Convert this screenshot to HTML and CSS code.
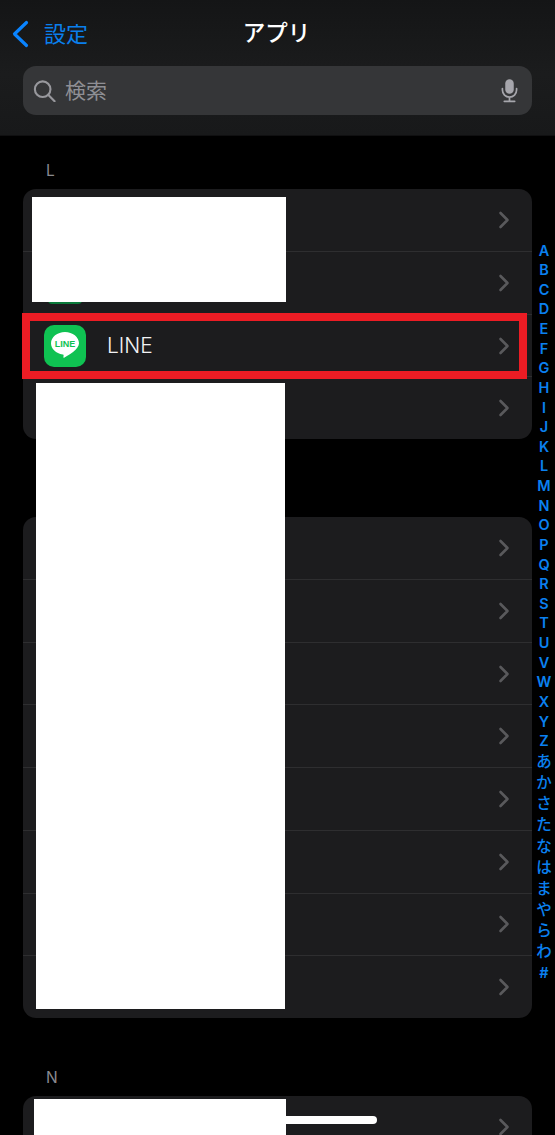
FILE: index.html
```html
<!DOCTYPE html>
<html lang="ja">
<head>
<meta charset="utf-8">
<title>アプリ</title>
<link rel="stylesheet" href="styles.css">
</head>
<body>
<div class="screen">
  <header class="header">
    <div class="nav">
      <div class="back">
        <svg class="back-icon" viewBox="0 0 18 28"><path d="M15.500 2.500 3.500 14l12 11.500"/></svg>
        <span class="back-text">設定</span>
      </div>
      <div class="title">アプリ</div>
    </div>
    <div class="search">
      <svg class="search-icon" viewBox="0 0 24 24"><circle cx="10" cy="10" r="8.500"/><path d="m16 16 7 7.200"/></svg>
      <span class="search-text">検索</span>
      <svg class="mic" viewBox="0 0 18 25"><rect x="4.500" y="0.500" width="9" height="15.500" rx="4.500"/><path class="mic-line" d="M1.500 10.500v1.500a7.500 7.500 0 0 0 15 0v-1.500M9 19.500v4M3.500 24h11"/></svg>
    </div>
  </header>

  <main class="list">
    <div class="section-label">L</div>
    <section class="group">
      <div class="row"><svg class="chev" viewBox="0 0 12 20"><path d="m2.500 3 7 7-7 7"/></svg></div>
      <div class="row"><svg class="chev" viewBox="0 0 12 20"><path d="m2.500 3 7 7-7 7"/></svg></div>
      <div class="row">
        <div class="app-icon">
          <svg viewBox="0 0 42 42">
            <path class="bubble" d="M21 7C13.300 7 7 12 7 18.300c0 5.600 5 10.300 11.700 11.200.5.100 1 .4.900 1l-.2 1.400c-.1.800.4 1.100 1.100.7 3.500-2 14.500-8.200 14.500-14.300C35 12 28.700 7 21 7z"/>
            <text class="logo-text" x="21" y="22.400" text-anchor="middle">LINE</text>
          </svg>
        </div>
        <span class="row-label">LINE</span>
        <svg class="chev" viewBox="0 0 12 20"><path d="m2.500 3 7 7-7 7"/></svg>
      </div>
      <div class="row"><svg class="chev" viewBox="0 0 12 20"><path d="m2.500 3 7 7-7 7"/></svg></div>
    </section>

    <section class="group group-second">
      <div class="row"><svg class="chev" viewBox="0 0 12 20"><path d="m2.500 3 7 7-7 7"/></svg></div>
      <div class="row"><svg class="chev" viewBox="0 0 12 20"><path d="m2.500 3 7 7-7 7"/></svg></div>
      <div class="row"><svg class="chev" viewBox="0 0 12 20"><path d="m2.500 3 7 7-7 7"/></svg></div>
      <div class="row"><svg class="chev" viewBox="0 0 12 20"><path d="m2.500 3 7 7-7 7"/></svg></div>
      <div class="row"><svg class="chev" viewBox="0 0 12 20"><path d="m2.500 3 7 7-7 7"/></svg></div>
      <div class="row"><svg class="chev" viewBox="0 0 12 20"><path d="m2.500 3 7 7-7 7"/></svg></div>
      <div class="row"><svg class="chev" viewBox="0 0 12 20"><path d="m2.500 3 7 7-7 7"/></svg></div>
      <div class="row"><svg class="chev" viewBox="0 0 12 20"><path d="m2.500 3 7 7-7 7"/></svg></div>
    </section>

    <div class="section-label section-label-n">N</div>
    <section class="group">
      <div class="row"><svg class="chev" viewBox="0 0 12 20"><path d="m2.500 3 7 7-7 7"/></svg></div>
    </section>
  </main>

  <nav class="index">
    <span>A</span><span>B</span><span>C</span><span>D</span><span>E</span><span>F</span><span>G</span><span>H</span><span>I</span><span>J</span><span>K</span><span>L</span><span>M</span><span>N</span><span>O</span><span>P</span><span>Q</span><span>R</span><span>S</span><span>T</span><span>U</span><span>V</span><span>W</span><span>X</span><span>Y</span><span>Z</span><span class="kana">あ</span><span class="kana">か</span><span class="kana">さ</span><span class="kana">た</span><span class="kana">な</span><span class="kana">は</span><span class="kana">ま</span><span class="kana">や</span><span class="kana">ら</span><span class="kana">わ</span><span>#</span>
  </nav>

  <div class="green-sliver"></div>
  <div class="home-bar"></div>
  <div class="highlight"></div>
  <div class="mask mask-a"></div>
  <div class="mask mask-b"></div>
  <div class="mask mask-c"></div>
</div>
</body>
</html>
```
FILE: styles.css
```css
* { box-sizing: border-box; }
html, body { margin: 0; padding: 0; background: #000; }
body { font-family: "Inter", "Liberation Sans", "Noto Sans CJK JP", sans-serif; }
.screen { position: relative; width: 555px; height: 1135px; overflow: hidden; background: #000; }

.header {
  height: 136px;
  padding: 0 23px;
  background: linear-gradient(180deg, #141516 0%, #1b1c1d 55%, #18191a 100%);
  border-bottom: 1px solid #101011;
}
.nav { position: relative; height: 66px; display: flex; align-items: center; justify-content: center; }
.back {
  position: absolute; left: -12px; top: 19px;
  display: flex; align-items: center; gap: 15px;
  color: #0a7fec; font: 400 22px/26px "Noto Sans CJK JP", sans-serif;
}
.back-text { margin-bottom: 3px; }
.back-icon { width: 18px; height: 28px; fill: none; stroke: #0a84ff; stroke-width: 3.200; stroke-linecap: round; stroke-linejoin: round; }
.title { color: #fff; font: 500 22.500px/26px "Noto Sans CJK JP", sans-serif; margin: 0 2px 4px 0; }

.search {
  height: 49px; border-radius: 13px; background: #353638;
  display: flex; align-items: center; padding: 0 14px 0 10px;
}
.search-icon { width: 23px; height: 22px; fill: none; stroke: #98989d; stroke-width: 2.300; stroke-linecap: round; }
.search-text { margin: 0 0 4px 9px; color: #8f8f94; font: 400 21px/26px "Noto Sans CJK JP", sans-serif; flex: 1; }
.mic { width: 17px; height: 25px; }
.mic rect { fill: #a6a6ac; }
.mic-line { fill: none; stroke: #a6a6ac; stroke-width: 1.800; stroke-linecap: round; }

.list { padding: 0 23px; }
.section-label { height: 53px; padding: 25px 0 0 23px; color: #8a8a8e; font-size: 15.500px; line-height: 20px; }
.section-label-n { height: 78px; padding-top: 50px; }
.group { background: #1c1c1e; border-radius: 13px; overflow: hidden; }
.group-second { margin-top: 78px; }
.row {
  height: 62.700px; display: flex; align-items: center; padding: 0 22px 0 21px;
  border-top: 1px solid #2e2e30;
}
.row:first-child { height: 62px; border-top: 0; }
.chev { width: 12px; height: 20px; margin-left: auto; fill: none; stroke: #59595c; stroke-width: 2.600; stroke-linecap: round; stroke-linejoin: round; }
.app-icon { width: 42px; height: 42px; border-radius: 10px; background: #0fc252; flex: none; }
.app-icon svg { display: block; width: 42px; height: 42px; }
.bubble { fill: #fff; }
.logo-text { fill: #0fc252; font: 700 9px "Liberation Sans", sans-serif; }
.row-label { margin-left: 21px; color: #f2f2f4; font-size: 21px; line-height: 26px; font-weight: 300; }

.index {
  position: absolute; left: 533px; top: 240.500px; width: 22px;
  display: flex; flex-direction: column; align-items: center;
  color: #0a80f0; font: 600 14.500px/19.630px "Inter", "Liberation Sans", sans-serif;
}
.index span { display: block; height: 19.630px; }
.index .kana { height: 21.200px; font: 500 15.500px/18px "Noto Sans CJK JP", sans-serif; }

.green-sliver { position: absolute; left: 48px; top: 300px; width: 34px; height: 4px; border-radius: 0 0 8px 8px; background: #0a7a3a; }
.home-bar { position: absolute; left: 177px; top: 1116px; width: 200px; height: 8px; border-radius: 4px; background: #fff; }
.highlight { position: absolute; left: 22px; top: 313px; width: 505px; height: 66px; border: 8px solid #ec1c24; }
.mask { position: absolute; background: #fff; }
.mask-a { left: 32px; top: 197px; width: 254px; height: 105px; }
.mask-b { left: 36px; top: 383px; width: 249px; height: 626px; }
.mask-c { left: 34px; top: 1099px; width: 252px; height: 36px; }
```
